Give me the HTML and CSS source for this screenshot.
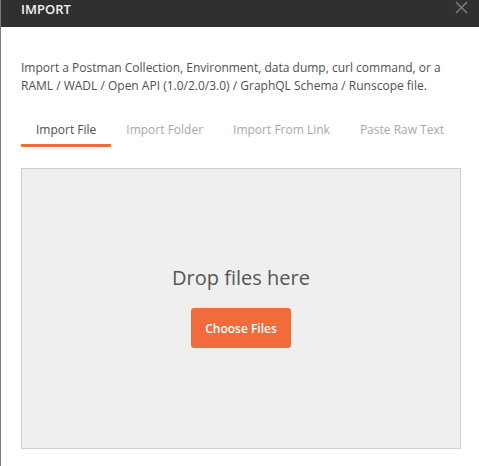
FILE: index.html
```html
<!DOCTYPE html>
<html lang="en">

<head>
  <meta charset="UTF-8">
  <meta name="viewport" content="width=device-width, initial-scale=1.0">
  <title>Import</title>
  <link rel="stylesheet" href="styles.css">
</head>

<body>

  <div class="modal">
    <div class="modal-header">
      <span class="modal-title">IMPORT</span>
      <button class="close-btn" aria-label="Close">
        <svg width="13" height="13" viewBox="0 0 13 13">
          <path d="M1 1 L12 12 M12 1 L1 12" stroke="#7b7b7b" stroke-width="1.6" fill="none"/>
        </svg>
      </button>
    </div>

    <div class="modal-body">
      <p class="description">Import a Postman Collection, Environment, data dump, curl command, or a RAML / WADL / Open API (1.0/2.0/3.0) / GraphQL Schema / Runscope file.</p>

      <div class="tabs">
        <div class="tab active">Import File</div>
        <div class="tab">Import Folder</div>
        <div class="tab">Import From Link</div>
        <div class="tab">Paste Raw Text</div>
      </div>

      <div class="dropzone">
        <div class="drop-text">Drop files here</div>
        <button class="choose-btn">Choose Files</button>
      </div>
    </div>
  </div>

</body>

</html>
```

FILE: styles.css
```css
body {
  margin: 0;
  font-family: 'Open Sans', sans-serif;
  background-color: #fff;
}

.modal {
  height: 466px;
  border-left: 1px solid #7a7a7a;
  box-sizing: border-box;
}

.modal-header {
  height: 27px;
  background-color: #303030;
  display: flex;
  align-items: center;
  justify-content: space-between;
  padding: 0 11px 0 20px;
}

.modal-title {
  color: #f0f0f0;
  font-size: 13px;
  font-weight: 600;
  margin-top: -9px;
}

.close-btn {
  background: none;
  border: none;
  padding: 0;
  margin-top: -12px;
  cursor: pointer;
  display: flex;
}

.modal-body {
  padding: 0 18px 0 20px;
}

.description {
  margin: 32px 0 0 0;
  font-size: 12px;
  line-height: 18px;
  color: #505050;
}

.tabs {
  display: flex;
  margin-top: 26px;
}

.tab {
  padding: 0 15px 5px;
  font-size: 12px;
  line-height: 18px;
  color: #a8a8a8;
  border-bottom: 3px solid transparent;
}

.tab.active {
  color: #505050;
  border-bottom-color: #f26b3a;
}

.dropzone {
  margin-top: 21px;
  height: 281px;
  box-sizing: border-box;
  background-color: #efefef;
  border: 1px solid #d0d0d0;
  display: flex;
  flex-direction: column;
  align-items: center;
  padding-top: 95px;
}

.drop-text {
  font-size: 20px;
  color: #555;
  line-height: 28px;
}

.choose-btn {
  margin-top: 16px;
  width: 100px;
  height: 40px;
  border: none;
  border-radius: 3px;
  background-color: #f26b3a;
  color: #fff;
  font-family: 'Open Sans', sans-serif;
  font-size: 12px;
  font-weight: 600;
}
```
